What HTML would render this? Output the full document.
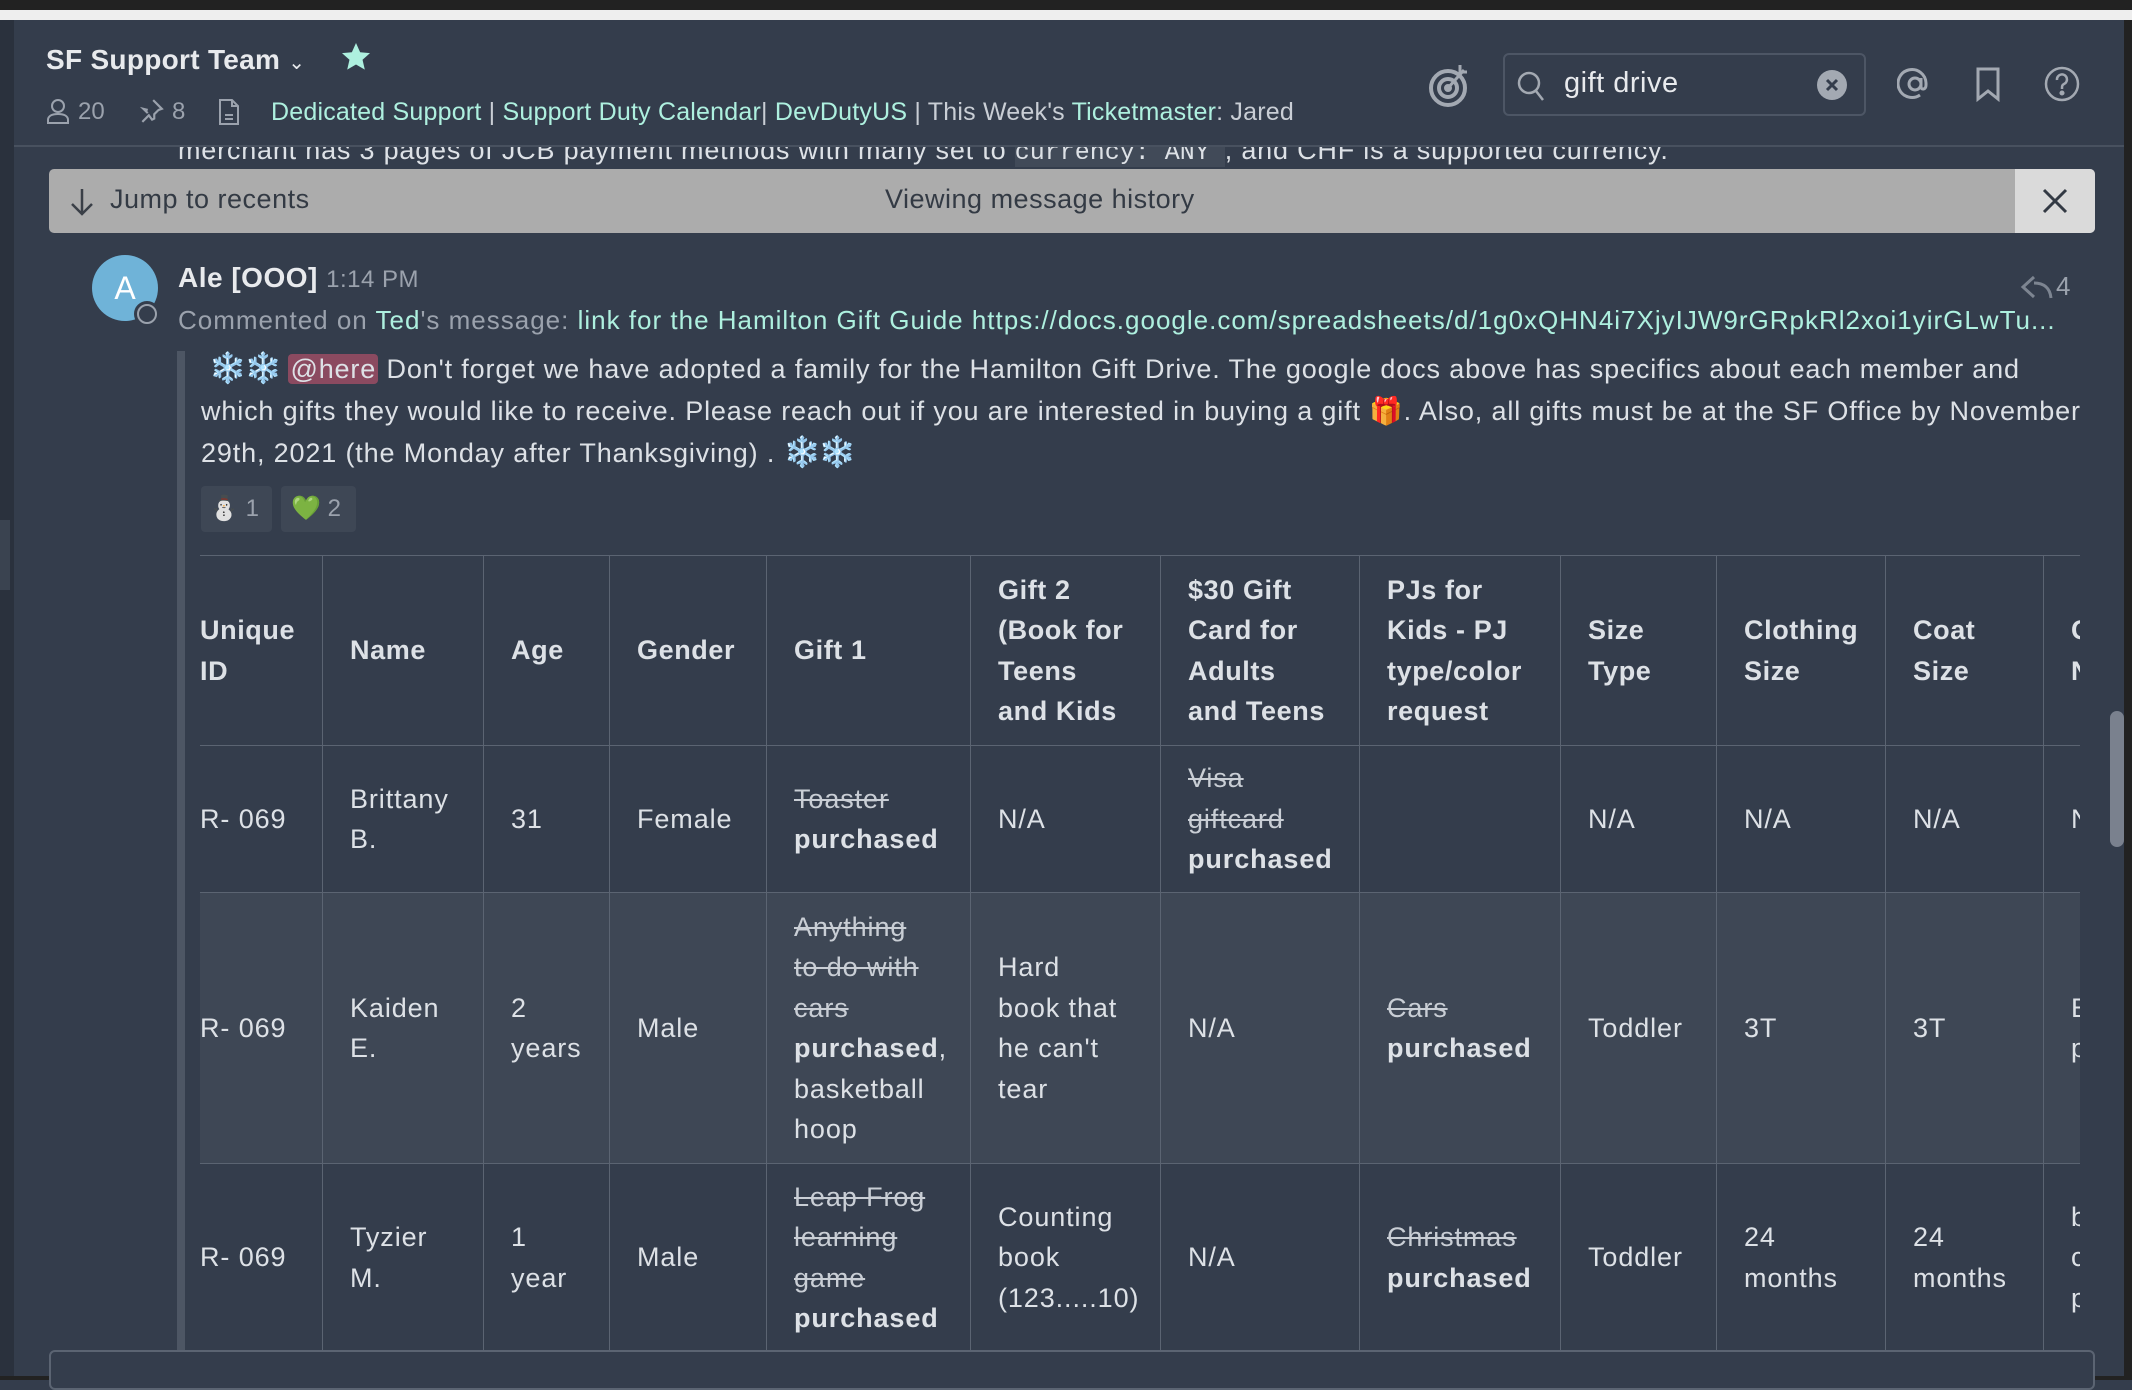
<!DOCTYPE html>
<html><head><meta charset="utf-8"><style>
*{margin:0;padding:0;box-sizing:border-box}
body{width:2132px;height:1380px;background:#343d4c;position:relative;overflow:hidden;font-family:"Liberation Sans","DejaVu Sans",sans-serif;color:#dde1e6}
.abs{position:absolute;white-space:nowrap}
.link{color:#aef0df}
.gray{color:#9ba2ad}
table{border-collapse:collapse;table-layout:fixed;font-size:27px;line-height:40.5px;color:#dde1e6;letter-spacing:0.9px}
td,th{border:1.5px solid #5b6472;padding:0 27px;vertical-align:middle;text-align:left;overflow:hidden;white-space:normal}
th{font-weight:bold;letter-spacing:0.6px}
s{color:#c9ced5}
b{font-weight:bold}
</style></head><body>
<div class="abs" style="left:0;top:0;width:2132px;height:10px;background:#222"></div>
<div class="abs" style="left:0;top:10px;width:2132px;height:10px;background:#eeeeee"></div>
<div class="abs" style="left:0;top:20px;width:14px;height:1360px;background:#2a313d"></div>
<div class="abs" style="left:0;top:520px;width:10px;height:70px;background:#3a4350"></div>
<div class="abs" style="left:2124px;top:20px;width:8px;height:1360px;background:#222"></div>
<div class="abs" style="left:0;top:1376px;width:2132px;height:4px;background:#222"></div>

<!-- header -->
<div class="abs" style="left:46px;top:44px;font-size:28px;font-weight:bold;color:#e8eaed;letter-spacing:0.3px">SF Support Team <span style="font-size:20px;font-weight:normal">&#8964;</span></div>
<svg class="abs" style="left:340px;top:41px" width="32" height="32" viewBox="0 0 24 24"><path d="M12 1.5l3.1 6.9 7.4.7-5.6 5 1.7 7.4L12 17.6l-6.6 3.9 1.7-7.4-5.6-5 7.4-.7z" fill="#aef0df"/></svg>
<svg class="abs" style="left:46px;top:98px" width="24" height="26" viewBox="0 0 24 26" fill="none" stroke="#9ba2ad" stroke-width="2"><circle cx="12" cy="8" r="6"/><path d="M2 25v-3c0-4 4-6 10-6s10 2 10 6v3z"/></svg>
<div class="abs gray" style="left:78px;top:98px;font-size:24px">20</div>
<svg class="abs" style="left:138px;top:98px" width="26" height="26" viewBox="0 0 24 24" fill="none" stroke="#9ba2ad" stroke-width="2"><path d="M14 2l8 8-3 1-4 4 0 4-2 1-3-4-6 6M9 11l-4-1 4 4"/></svg>
<div class="abs gray" style="left:172px;top:98px;font-size:24px">8</div>
<svg class="abs" style="left:218px;top:98px" width="22" height="28" viewBox="0 0 22 28" fill="none" stroke="#9ba2ad" stroke-width="2"><path d="M2 2h12l6 6v18H2z M14 2v6h6 M7 17h8 M7 21h8"/></svg>
<div class="abs" style="left:271px;top:98px;font-size:25px;color:#c9ced5;letter-spacing:0.2px"><span class="link">Dedicated Support</span> | <span class="link">Support Duty Calendar</span>| <span class="link">DevDutyUS</span> | This Week's <span class="link">Ticketmaster</span>: Jared</div>

<svg class="abs" style="left:1428px;top:62px" width="44" height="46" viewBox="0 0 44 46" fill="none" stroke="#a3a9b2" stroke-width="4"><circle cx="20" cy="26" r="17"/><circle cx="20" cy="26" r="9"/><circle cx="20" cy="26" r="2" fill="#a3a9b2"/><path d="M20 26L36 8M32 3v7h7" stroke-width="3"/></svg>
<div class="abs" style="left:1503px;top:53px;width:363px;height:63px;border:2px solid #4d5665;border-radius:6px"></div>
<svg class="abs" style="left:1516px;top:70px" width="30" height="32" viewBox="0 0 30 32" fill="none" stroke="#a3a9b2" stroke-width="2.5"><circle cx="13" cy="13" r="10"/><path d="M20 21l7 9"/></svg>
<div class="abs" style="left:1564px;top:67px;font-size:29px;color:#e8eaed;letter-spacing:0.5px">gift drive</div>
<svg class="abs" style="left:1817px;top:70px" width="30" height="30" viewBox="0 0 30 30"><circle cx="15" cy="15" r="15" fill="#a3a9b2"/><path d="M10 10l10 10M20 10l-10 10" stroke="#343d4c" stroke-width="3"/></svg>
<svg class="abs" style="left:1897px;top:66px" width="36" height="36" viewBox="0 0 36 36" fill="none" stroke="#a3a9b2" stroke-width="3"><circle cx="18" cy="18" r="6"/><path d="M24 12v9c0 3 5 3 5-2v-2a14 14 0 1 0-6 12"/></svg>
<svg class="abs" style="left:1974px;top:66px" width="28" height="36" viewBox="0 0 28 36" fill="none" stroke="#a3a9b2" stroke-width="3"><path d="M4 3h20v30l-10-8-10 8z"/></svg>
<svg class="abs" style="left:2044px;top:66px" width="36" height="36" viewBox="0 0 36 36" fill="none" stroke="#a3a9b2" stroke-width="2.5"><circle cx="18" cy="18" r="16"/><path d="M13 14a5 5 0 1 1 7 4c-2 1-2 2-2 5"/><circle cx="18" cy="27" r="1.3" fill="#a3a9b2"/></svg>
<div class="abs" style="left:14px;top:145px;width:2110px;height:2px;background:#48515f"></div>

<!-- cut-off previous message line -->
<div class="abs" style="left:14px;top:147px;width:2110px;height:22px;overflow:hidden">
<div class="abs" style="left:164px;top:-12px;font-size:27px;color:#dde1e6;letter-spacing:0.8px">merchant has 3 pages of JCB payment methods with many set to <span style="font-family:'Liberation Mono',monospace;background:#414a58;font-size:25px;letter-spacing:0"> currency: ANY </span>, and CHF is a supported currency.</div></div>

<!-- banner -->
<div class="abs" style="left:49px;top:169px;width:2046px;height:64px;background:#acacac;border-radius:5px;overflow:hidden">
<svg class="abs" style="left:20px;top:18px" width="26" height="30" viewBox="0 0 26 30" fill="none" stroke="#3a3f47" stroke-width="2.5"><path d="M13 2v25M3 17l10 10 10-10"/></svg>
<div class="abs" style="left:61px;top:15px;font-size:27px;color:#333a44;letter-spacing:0.5px">Jump to recents</div>
<div class="abs" style="left:836px;top:15px;font-size:27px;color:#333a44;letter-spacing:0.5px">Viewing message history</div>
<div class="abs" style="left:1966px;top:0;width:80px;height:64px;background:#dadada"></div>
<svg class="abs" style="left:1993px;top:19px" width="26" height="26" viewBox="0 0 26 26" stroke="#333a44" stroke-width="3"><path d="M2 2l22 22M24 2L2 24"/></svg>
</div>

<!-- message -->
<div class="abs" style="left:92px;top:255px;width:66px;height:66px;border-radius:50%;background:#6fb3d8;color:#fff;font-size:32px;text-align:center;line-height:66px">A</div>
<div class="abs" style="left:134px;top:301px;width:26px;height:26px;border-radius:50%;background:#343d4c;border:3px solid #343d4c"><div style="width:20px;height:20px;border-radius:50%;border:2.5px solid #9ba2ad"></div></div>
<div class="abs" style="left:178px;top:262px;font-size:28px;font-weight:bold;color:#e8eaed;letter-spacing:0.5px">Ale [OOO] <span style="font-weight:normal;font-size:24px" class="gray">1:14 PM</span></div>
<svg class="abs" style="left:2020px;top:274px" width="34" height="28" viewBox="0 0 34 28" fill="none" stroke="#7d8591" stroke-width="3"><path d="M14 3L3 13l11 10M14 9c10 0 16 5 17 15"/></svg>
<div class="abs gray" style="left:2056px;top:271px;font-size:26px">4</div>
<div class="abs" style="left:178px;top:305px;font-size:26px;width:1886px;overflow:hidden;text-overflow:ellipsis;letter-spacing:1px"><span class="gray">Commented on </span><span class="link">Ted</span><span class="gray">'s message: </span><span class="link">link for the Hamilton Gift Guide https://docs.google.com/spreadsheets/d/1g0xQHN4i7XjyIJW9rGRpkRl2xoi1yirGLwTu...</span></div>

<div class="abs" style="left:177px;top:351px;width:8px;height:999px;background:#4d5664"></div>
<div class="abs" style="left:201px;top:348px;width:1880px;font-size:27px;line-height:42px;white-space:normal;color:#dde1e6;letter-spacing:0.85px">&nbsp;<span style="color:#a9d3ff;font-size:30px;letter-spacing:-2px">❄️❄️</span> <span style="background:#8b4a60;border-radius:4px;padding:0 2px">@here</span> Don't forget we have adopted a family for the Hamilton Gift Drive. The google docs above has specifics about each member and which gifts they would like to receive. Please reach out if you are interested in buying a gift 🎁. Also, all gifts must be at the SF Office by November 29th, 2021 (the Monday after Thanksgiving) .  <span style="color:#a9d3ff;font-size:30px;letter-spacing:-2px">❄️❄️</span></div>
<div class="abs" style="left:201px;top:486px;width:71px;height:46px;background:#3e4755;border-radius:4px;font-size:24px;line-height:46px;padding-left:8px" ><span>⛄</span> <span class="gray">1</span></div>
<div class="abs" style="left:281px;top:486px;width:75px;height:46px;background:#3e4755;border-radius:4px;font-size:24px;line-height:46px;padding-left:10px"><span>💚</span> <span class="gray">2</span></div>

<!-- table -->
<div class="abs" style="left:200px;top:555px;width:1880px;height:795px;overflow:hidden">
<table style="position:absolute;left:-28px;top:0;width:2030px">
<colgroup><col style="width:150px"><col style="width:161px"><col style="width:126px"><col style="width:157px"><col style="width:204px"><col style="width:190px"><col style="width:199px"><col style="width:201px"><col style="width:156px"><col style="width:169px"><col style="width:158px"><col style="width:159px"></colgroup>
<tr style="height:190px"><th>Unique ID</th><th>Name</th><th>Age</th><th>Gender</th><th>Gift 1</th><th>Gift 2 (Book for Teens and Kids</th><th>$30 Gift Card for Adults and Teens</th><th>PJs for Kids - PJ type/color request</th><th>Size Type</th><th>Clothing Size</th><th>Coat Size</th><th>Coat Name</th></tr>
<tr style="height:147px"><td>R- 069</td><td>Brittany B.</td><td>31</td><td>Female</td><td><s>Toaster</s> <b>purchased</b></td><td>N/A</td><td><s>Visa giftcard</s> <b>purchased</b></td><td></td><td>N/A</td><td>N/A</td><td>N/A</td><td>N/A</td></tr>
<tr style="height:271px;background:#3e4755"><td>R- 069</td><td>Kaiden E.</td><td>2 years</td><td>Male</td><td><s>Anything<br>to do with cars</s> <b>purchased</b>, basketball hoop</td><td>Hard<br>book that he can't tear</td><td>N/A</td><td><s>Cars</s> <b>purchased</b></td><td>Toddler</td><td>3T</td><td>3T</td><td>Blue plain</td></tr>
<tr style="height:188px"><td>R- 069</td><td>Tyzier M.</td><td>1 year</td><td>Male</td><td><s>Leap Frog learning game</s> <b>purchased</b></td><td>Counting book (123.....10)</td><td>N/A</td><td><s>Christmas</s> <b>purchased</b></td><td>Toddler</td><td>24 months</td><td>24 months</td><td>blue color pls</td></tr>
</table></div>
<div class="abs" style="left:2110px;top:711px;width:14px;height:136px;background:#7a818e;border-radius:7px"></div>
<div class="abs" style="left:49px;top:1350px;width:2046px;height:40px;border:2px solid #5b6472;border-radius:6px;background:#343d4c"></div>
</body></html>
